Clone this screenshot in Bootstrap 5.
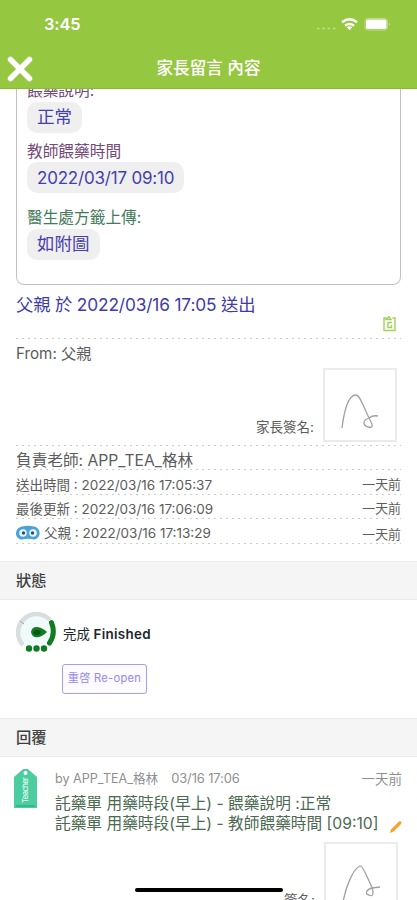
<!DOCTYPE html>
<html lang="zh-Hant">
<head>
<meta charset="utf-8">
<meta name="viewport" content="width=device-width, initial-scale=1">
<title>家長留言 內容</title>
<link href="https://cdn.jsdelivr.net/npm/bootstrap@5.3.0/dist/css/bootstrap.min.css" rel="stylesheet">
<style>
body{font-family:Inter,"Noto Sans CJK TC",sans-serif;color:#5c5c5c;font-size:15px;line-height:20px}
.screen{width:417px;height:900px}
.topbar{height:89px;background:#96c741;border-bottom:1px solid #8bbb35}
.status{height:48px;padding:0 26px 0 44px}
.clock{font-size:16.4px;font-weight:600;letter-spacing:-.1px}
.title-row{height:40px;padding-left:6px}
.title-text{font-size:16.6px;font-weight:500;padding:0 34px 0 0}
.page{height:811px}
.form-box{height:196px;margin:0 16px;padding:0 10px;border:1.5px solid #c2c2c2;border-top:0;border-radius:0 0 8px 8px}
.field-label{font-size:15.7px;color:#75497a;height:20px}
.label-first{margin-top:-8px}
.pill{background:#efefef;color:#4540ae;border-radius:10px;height:31px;line-height:30px;padding:0 10px;font-size:17.5px}
.pill-date{font-size:17px;letter-spacing:-.2px;line-height:32px}
.green-ink{color:#44795a}
.sent-line{font-size:17.3px;letter-spacing:-.14px;color:#403ba8;height:38px;line-height:39px}
.dots{background:repeating-linear-gradient(90deg,#ccc 0 2px,transparent 2px 6px) bottom/100% 1px no-repeat}
.info{height:24.4px;font-size:13.5px}
.info-text{padding-top:4px}
.ago{font-size:12.9px}
.sign-box{width:74px;height:74px;border:2px solid #ebebeb}
.section-head{height:39px;background:#f5f5f5;border-top:1px solid #ebebeb;border-bottom:1px solid #ebebeb;font-size:15.3px;font-weight:500;color:#3f3f3f;padding-top:1px}
.reopen{width:85px;height:30px;border:1.5px solid #a99bea;color:#9a88ea;border-radius:3px;font-size:11.2px;padding:0;letter-spacing:.25px;background:#fcfbff}
.reply-text{font-size:15.7px;line-height:20px;color:#4c6951}
.by{font-size:12.6px;color:#8f8f8f}
.home-bar{left:135px;top:888px;width:148px;height:4px;background:#000}
svg{display:block;flex:none}
</style>
</head>
<body>
<div class="screen position-relative overflow-hidden bg-white">
  <header class="topbar text-white">
    <div class="status d-flex align-items-center">
      <span class="clock me-auto">3:45</span>
      <svg width="76" height="18" viewBox="0 0 76 18">
        <path d="M2 13.500h19" stroke="#fff" stroke-opacity=".4" stroke-width="1.500" stroke-dasharray="2.500 2.800"/>
        <g fill="none" stroke="#fff" stroke-width="2.500"><path d="M27 7.300q7.500-6 15 0M30 10.800q4.500-3.600 9 0"/></g>
        <path d="M31.800 12.200q2.700-2 5.400 0l-2.700 3z" fill="#fff"/>
        <rect x="50" y="3.500" width="22.500" height="11.500" rx="3" fill="none" stroke="#fff" stroke-opacity=".4"/>
        <rect x="51" y="4.500" width="20.500" height="9.500" rx="1.800" fill="#fff"/>
        <path d="M74 7.500q2 1.500 0 3.500z" fill="#fff" fill-opacity=".5"/>
      </svg>
    </div>
    <div class="title-row d-flex align-items-center">
      <svg width="28" height="28" viewBox="0 0 28 28"><path d="M4.500 5.500l19 19M23.500 5.500l-19 19" stroke="#fff" stroke-width="5.500" stroke-linecap="round"/></svg>
      <div class="title-text flex-fill text-center">家長留言 內容</div>
    </div>
  </header>

  <main class="page overflow-hidden">
    <section class="form-box d-flex flex-column align-items-start overflow-hidden">
      <div class="field-label label-first">餵藥說明:</div>
      <div class="pill" style="margin-top:1px">正常</div>
      <div class="field-label" style="margin-top:9px">教師餵藥時間</div>
      <div class="pill pill-date">2022/03/17 09:10</div>
      <div class="field-label green-ink" style="margin-top:15px">醫生處方籤上傳:</div>
      <div class="pill" style="margin-top:1px">如附圖</div>
    </section>

    <section class="px-3">
      <div class="dots" style="height:54px">
        <div class="sent-line">父親 於 2022/03/16 17:05 送出</div>
        <svg class="ms-auto me-1" style="margin-top:-8px" width="15" height="17" viewBox="0 0 15 17"><path d="M4.500 3H2v12.500h11V3h-2.500M4 4.500h5l-2-3zM10 7.500H6v5h3.500V10" fill="none" stroke="#a5d05a" stroke-width="1.400"/></svg>
      </div>
      <div class="dots d-flex" style="height:107px">
        <div style="padding-top:5px;font-size:15.2px">From: 父親</div>
        <div class="ms-auto d-flex align-items-end" style="padding:0 4px 4px 0">
          <span style="font-size:13.5px;margin:0 9px 5px 0">家長簽名:</span>
          <div class="sign-box"><svg width="70" height="70" viewBox="0 0 70 70"><path d="M17 58C19 42 23 25 31 25C35 25 37 34 45 50C49 57 47 58 43 57C37 55 38 50 44 48Q48 45 53 46" fill="none" stroke="#a0a0a0" stroke-width="1.300"/></svg></div>
        </div>
      </div>
      <div class="dots info d-flex align-items-end" style="font-size:15.65px;line-height:18px"><span>負責老師: APP_TEA_格林</span></div>
      <div class="dots info info-text d-flex align-items-center justify-content-between"><span>送出時間 : 2022/03/16 17:05:37</span><span class="ago">一天前</span></div>
      <div class="dots info info-text d-flex align-items-center justify-content-between"><span>最後更新 : 2022/03/16 17:06:09</span><span class="ago">一天前</span></div>
      <div class="dots info info-text d-flex align-items-center">
        <svg width="24" height="18" viewBox="0 0 24 18"><path d="M6 2.500Q12 1 18 2.500C26 4 25 15 18 15.500Q12 14 6 15.500C-2 15-2 4 6 2.500" fill="#4ba3d8"/><circle cx="7" cy="9" r="3.800" fill="#e8f5fd"/><circle cx="17" cy="9" r="3.800" fill="#e8f5fd"/><circle cx="7.500" cy="9" r="1.700" fill="#28506d"/><circle cx="16.500" cy="9" r="1.700" fill="#28506d"/></svg>
        <span style="margin-left:4px">父親 : 2022/03/16 17:13:29</span><span class="ago ms-auto pt-1">一天前</span>
      </div>
    </section>

    <div class="section-head d-flex align-items-center px-3" style="margin-top:17px">狀態</div>
    <section class="d-flex px-3" style="height:118px;padding-top:12px">
      <svg width="41" height="42" viewBox="0 0 41 42"><circle cx="20" cy="20" r="16" fill="#f1fafa"/><path d="M7 33A18 18 0 1 1 34 8" fill="none" stroke="#d9dddd" stroke-width="4.500"/><path d="M4 9l4 3" stroke="#aaa"/><path d="M35.500 10.500Q40 22 33.500 31" fill="none" stroke="#107b20" stroke-width="5" stroke-linecap="round"/><path d="M15 20C16 13 24 14 31 20C24 27 16 27 15 20" fill="#107b20"/><ellipse cx="21" cy="20.500" rx="3.500" ry="2.500" fill="#075818"/><g fill="#107b20"><circle cx="13" cy="36.500" r="3.200"/><circle cx="20.500" cy="36.500" r="3.200"/><circle cx="28" cy="36.500" r="3.200"/></g></svg>
      <div style="margin-left:6px;padding-top:12px;font-size:13.4px">
        <div class="text-dark">完成 <b class="fw-semibold" style="letter-spacing:.3px">Finished</b></div>
        <button type="button" class="btn reopen" style="margin:20px 0 0 -1px">重啓 Re-open</button>
      </div>
    </section>
    <div class="section-head d-flex align-items-center px-3">回覆</div>
    <section class="d-flex" style="padding:12px 15px 0 14px">
      <svg width="23" height="39" viewBox="0 0 23 39"><path d="M0 8L8 1Q11.500-2 15 1L23 8V39H0z" fill="#4dcca0"/><path d="M2 37h19" stroke="#34b98b" stroke-width="2"/><circle cx="11.500" cy="4" r="2" fill="#fff"/><text transform="translate(14 34) rotate(-90)" font-size="7.500" font-weight="500" fill="#e9fff7" textLength="26">Teacher</text></svg>
      <div class="flex-fill" style="margin-left:18px">
        <div class="by d-flex"><span>by APP_TEA_格林</span><span style="margin-left:13px;font-size:12.9px;letter-spacing:-.1px">03/16 17:06</span><span class="ago ms-auto" style="font-size:13.5px">一天前</span></div>
        <div class="reply-text d-flex align-items-end" style="margin-top:5px"><div class="text-nowrap">託藥單 用藥時段(早上) - 餵藥說明 :正常<br>託藥單 用藥時段(早上) - 教師餵藥時間 [09:10]</div>
          <svg class="ms-auto" width="13" height="14" viewBox="0 0 13 14"><path d="M1 13l1-3.500L10 1.500q3-1 2.500 2L4.500 11.500z" fill="#f5a12b"/></svg></div>
        <div class="d-flex justify-content-end" style="padding:8px 4px 0 0">
          <span style="font-size:13.5px;margin:48px 9px 0 0">簽名:</span>
          <div class="sign-box"><svg width="70" height="70" viewBox="0 0 70 70"><path d="M17 58C20 42 27 25 34 22C37 21 42 36 46 43C48 50 47 53 43 51C38 50 41 45 46 44L54 43" fill="none" stroke="#a0a0a0" stroke-width="1.300"/></svg></div>
        </div>
      </div>
    </section>
  </main>
  <div class="home-bar position-absolute rounded-pill"></div>
</div>
<script src="https://cdn.jsdelivr.net/npm/bootstrap@5.3.0/dist/js/bootstrap.bundle.min.js"></script>
</body>
</html>
